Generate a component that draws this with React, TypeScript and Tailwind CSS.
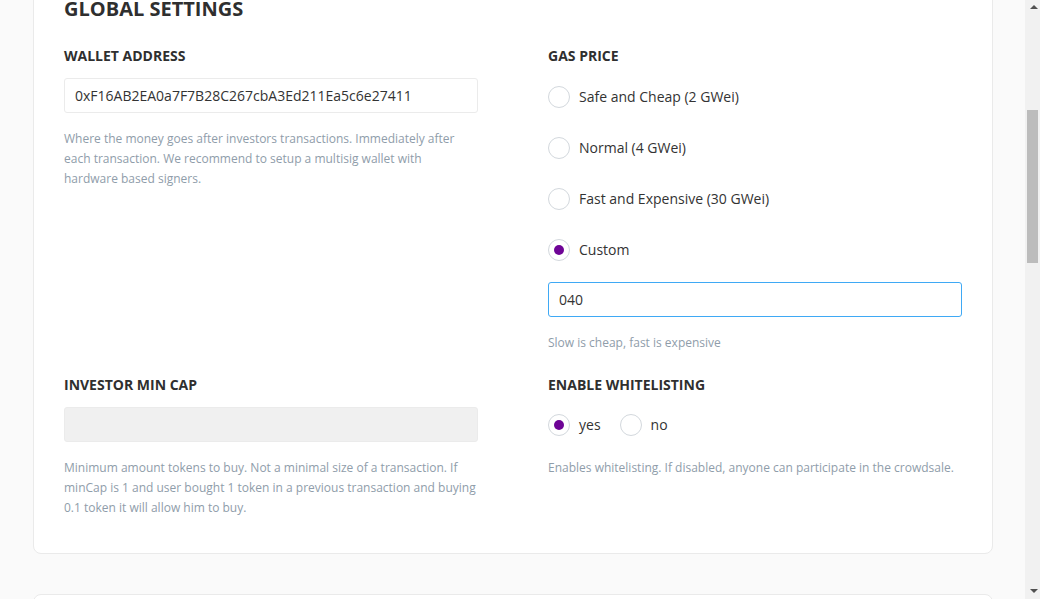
import React from "react";

const font = { fontFamily: '"Open Sans", "Noto Sans", sans-serif' };

function Radio({ checked, label }: { checked?: boolean; label: string }) {
  return (
    <div className="flex items-center h-[22px]">
      <span className="w-[22px] h-[22px] rounded-full border border-[#d3d8dd] bg-white flex items-center justify-center shrink-0">
        {checked && <span className="w-[10px] h-[10px] rounded-full bg-[#6e0496]" />}
      </span>
      <span className="ml-[9px] text-[14px] text-[#333] leading-[20px]">{label}</span>
    </div>
  );
}

function Label({ children }: { children: React.ReactNode }) {
  return <div className="text-[14px] leading-[20px] font-bold text-[#2f2f2f] uppercase">{children}</div>;
}

function Help({ children, extra }: { children: React.ReactNode; extra?: boolean }) {
  return (
    <div className={(extra ? "mt-[22px]" : "mt-[16px]") + " text-[12px] leading-[20px] text-[#8f9daa]"}>{children}</div>
  );
}

export default function App() {
  return (
    <div className="flex w-[1040px] h-[599px] overflow-hidden bg-[#fafafa]" style={font}>
      <div className="flex-1 overflow-hidden">
        <div className="w-[960px] ml-[33px] -mt-[30px]">
          <div className="bg-white border border-[#eaeaea] rounded-[8px] px-[30px] pt-[26px] pb-[35px]">
            <h2 className="text-[20px] leading-[24px] font-bold text-[#2f2f2f] uppercase">Global Settings</h2>
            <div className="grid grid-cols-[414px_414px] gap-x-[70px] gap-y-[22px] mt-[25px]">
              <div>
                <Label>Wallet Address</Label>
                <div className="mt-[12px] h-[35px] border border-[#ebebeb] rounded-[3px] px-[10px] flex items-center text-[14px] text-[#333]">
                  0xF16AB2EA0a7F7B28C267cbA3Ed211Ea5c6e27411
                </div>
                <Help>
                  Where the money goes after investors transactions. Immediately after each transaction. We recommend to setup a multisig wallet with hardware based signers.
                </Help>
              </div>
              <div>
                <Label>Gas Price</Label>
                <div className="mt-[20px] flex flex-col gap-[29px]">
                  <Radio label="Safe and Cheap (2 GWei)" />
                  <Radio label="Normal (4 GWei)" />
                  <Radio label="Fast and Expensive (30 GWei)" />
                  <Radio checked label="Custom" />
                </div>
                <div className="mt-[21px] h-[35px] border border-[#3fa9f5] rounded-[3px] px-[10px] flex items-center text-[14px] text-[#333]">
                  040
                </div>
                <Help>Slow is cheap, fast is expensive</Help>
              </div>
              <div>
                <Label>Investor min cap</Label>
                <div className="mt-[12px] h-[35px] border border-[#ebebeb] bg-[#f0f0f0] rounded-[3px]" />
                <Help>
                  Minimum amount tokens to buy. Not a minimal size of a transaction. If minCap is 1 and user bought 1 token in a previous transaction and buying 0.1 token it will allow him to buy.
                </Help>
              </div>
              <div>
                <Label>Enable whitelisting</Label>
                <div className="mt-[19px] flex items-center gap-[19px]">
                  <Radio checked label="yes" />
                  <Radio label="no" />
                </div>
                <Help extra>Enables whitelisting. If disabled, anyone can participate in the crowdsale.</Help>
              </div>
            </div>
          </div>
          <div className="mt-[40px] h-[100px] bg-white border border-[#eaeaea] rounded-[8px]" />
        </div>
      </div>
      <div className="w-[15px] h-[599px] bg-[#f1f1f1] relative shrink-0">
        <div className="absolute left-[5px] top-[5px] w-0 h-0 border-l-[4px] border-r-[4px] border-b-[4px] border-l-transparent border-r-transparent border-b-[#505050]" />
        <div className="absolute left-[2px] top-[110px] w-[11px] h-[153px] bg-[#bcbcbc]" />
        <div className="absolute left-[5px] top-[589px] w-0 h-0 border-l-[4px] border-r-[4px] border-t-[4px] border-l-transparent border-r-transparent border-t-[#505050]" />
      </div>
    </div>
  );
}
